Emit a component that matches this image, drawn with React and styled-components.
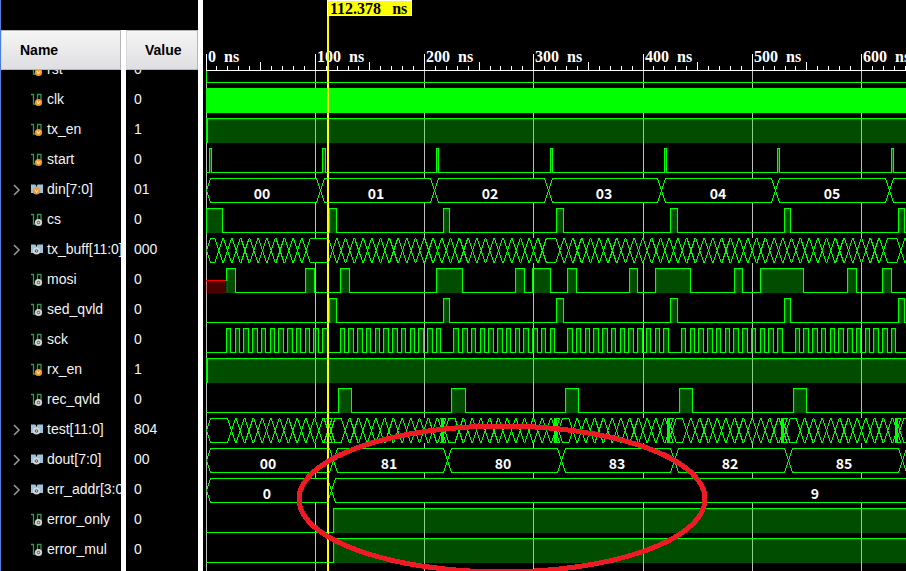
import React from 'react';
import styled, { createGlobalStyle } from 'styled-components';

const GlobalStyle = createGlobalStyle`
  * { box-sizing: border-box; }
  body { margin: 0; background: #000; }
`;

const Viewer = styled.main`
  display: flex;
  height: 100vh;
  min-height: 400px;
  overflow: hidden;
  background: #000;
  color: #f4f4f4;
  font: 14px/30px "Liberation Sans", Arial, sans-serif;
`;

const SignalPanel = styled.section`
  display: flex;
  flex: none;
  flex-direction: column;
  padding-top: 30px;
  border-left: 1px solid #4a7fd6;
  border-right: 5px solid #fff;
`;

const SignalTable = styled.table`
  display: flex;
  flex: 1;
  flex-direction: column;
  min-height: 0;
`;

const TableHead = styled.thead`
  display: block;
`;

const TableBody = styled.tbody`
  display: flex;
  flex: 1;
  flex-direction: column;
  min-height: 0;
`;

const Row = styled.tr`
  display: grid;
  grid-template-columns: 120px 72px;
  grid-template-rows: ${(p) => (p.$scrolled ? '14px' : 'auto')};
  column-gap: 5px;
  flex: ${(p) => (p.$last ? '1 0 30px' : 'none')};
  align-items: ${(p) => (p.$scrolled ? 'end' : 'stretch')};
  overflow: hidden;
  background: linear-gradient(#fff, #fff) 120px 0 / 5px 100% no-repeat;
`;

const HeadCell = styled.th`
  height: 40px;
  padding: 0 18px;
  border: 1px solid #b6b6b8;
  border-left-color: #d8d8da;
  background: linear-gradient(#f5f5f5, #dfdfe3);
  color: #000;
  font-weight: bold;
  line-height: 38px;
  text-align: left;
`;

const NameCell = styled.td`
  display: grid;
  grid-template-columns: 18px 16px 1fr;
  grid-auto-rows: 30px;
  align-items: center;
  padding: 0 0 0 11px;
  overflow: hidden;
  white-space: nowrap;
`;

const NameText = styled.span`
  grid-column: 3;
  padding-left: 1px;
`;

const ValueCell = styled.td`
  padding: 0 8px;
`;

const Expander = styled.button`
  display: flex;
  width: 12px;
  height: 16px;
  padding: 0;
  border: 0;
  background: none;
  color: #9a9a9a;
  cursor: pointer;
`;

const Glyph = styled.svg`
  grid-column: 2;
  display: block;
  width: 16px;
  height: 16px;
`;

const WavePanel = styled.section`
  display: flex;
  flex: 1;
  min-width: 0;
`;

const WaveChart = styled.svg`
  flex: 1;
  min-width: 0;
  height: 100%;
  overflow: hidden;
  shape-rendering: crispEdges;
`;

const RulerText = styled.text`
  font: bold 16px "Liberation Serif", "Times New Roman", serif;
  fill: ${(p) => (p.$dark ? '#000' : '#fff')};
`;

const BusText = styled.text`
  font: bold 14px "Noto Sans CJK SC", "Noto Sans", sans-serif;
  fill: #fff;
  text-anchor: middle;
`;

const signals = [
  { name: 'rst', value: '0', input: true },
  { name: 'clk', value: '0', input: true },
  { name: 'tx_en', value: '1', input: true },
  { name: 'start', value: '0', input: true },
  { name: 'din[7:0]', value: '01', input: true, bus: true },
  { name: 'cs', value: '0' },
  { name: 'tx_buff[11:0]', value: '000', bus: true },
  { name: 'mosi', value: '0' },
  { name: 'sed_qvld', value: '0' },
  { name: 'sck', value: '0' },
  { name: 'rx_en', value: '1', input: true },
  { name: 'rec_qvld', value: '0' },
  { name: 'test[11:0]', value: '804', bus: true },
  { name: 'dout[7:0]', value: '00', bus: true },
  { name: 'err_addr[3:0]', value: '0', bus: true },
  { name: 'error_only', value: '0' },
  { name: 'error_mul', value: '0' },
];

const GREEN = '#00ff00';
const END = 2000;
const SWING = 24;
const FRAME = 113.76;
const BIT = 8.745;
const NS = 1.0925;

const range = (n) => Array.from({ length: n }, (_, i) => i);

const chipSelect = [[123, 130], [237, 243], [350, 357], [464, 471], [578, 584], [692, 698]];
const startPulses = [[3, 5], [116, 119], [230, 232], [344, 346], [458, 460], [571, 573], [685, 687]];
const mosiPulses = [
  [20, 29], [99, 108], [134, 143], [230, 256], [309, 318], [326, 344], [361, 370],
  [423, 431], [449, 484], [528, 536], [554, 597], [641, 650], [676, 685],
];
const recPulses = [[132, 145], [245, 259], [359, 372], [473, 486], [587, 600]];
const clockPulses = range(6).flatMap((g) =>
  range(12).map((k) => {
    const x = 20.3 + g * FRAME + k * BIT;
    return [Math.floor(x), Math.floor(x + 4.6)];
  }),
);

const idleBits = [11, 12, 38, 77];
const bufferEdges = range(84).filter((k) => !idleBits.includes(k)).map((k) => 12.3 + k * BIT);
const testEdges = range(7).flatMap((g) => [
  ...range(11).map((k) => 25 + g * FRAME + k * BIT),
  121.5 + g * FRAME,
  124.5 + g * FRAME,
]);
const testBursts = [235, 348, 461, 575, 689];

const dinLabels = [[56, '00'], [170, '01'], [284, '02'], [398, '03'], [512, '04'], [626, '05']];
const doutLabels = [[62, '00'], [183, '81'], [297, '80'], [411, '83'], [524, '82'], [638, '85']];

function SignalIcon({ bus, input }) {
  const cx = bus ? 6.5 : 8.5;
  const cy = bus ? 10 : 11.5;
  return (
    <Glyph viewBox="0 0 16 16" aria-hidden="true">
      {bus ? (
        <path d="M1 3.500h4.500l1 2.500 1-2.500H13V12H1z" fill="#9cc3d9" />
      ) : (
        <path d="M1 3.500h2.500v9.500H7.500V3.500h3.500v8" fill="none" stroke="#35984b" strokeWidth="1.300" />
      )}
      <circle cx={cx} cy={cy} r="3.600" fill={input ? '#f3962f' : '#d6d6d6'} />
      {input ? (
        <path d={`M${cx - 1.5} ${cy - 1.5}l1.500 3 1.500-3`} fill="none" stroke="#fff" />
      ) : (
        <circle cx={cx} cy={cy} r="1.300" fill="#d6d6d6" stroke="#555" />
      )}
    </Glyph>
  );
}

function SignalRow({ signal, first, last }) {
  return (
    <Row $scrolled={first} $last={last}>
      <NameCell>
        {signal.bus && (
          <Expander type="button" aria-label={`Expand ${signal.name}`}>
            <svg width="12" height="16" viewBox="0 0 12 16" aria-hidden="true">
              <path d="M2 4l5 5-5 5" fill="none" stroke="currentColor" strokeWidth="1.500" />
            </svg>
          </Expander>
        )}
        <SignalIcon bus={signal.bus} input={signal.input} />
        <NameText>{signal.name}</NameText>
      </NameCell>
      <ValueCell>{signal.value}</ValueCell>
    </Row>
  );
}

function LogicTrace({ top, pulses, unknownUntil = 0 }) {
  const high = top + 0.5;
  const low = high + SWING;
  const steps = pulses.map(([a, b]) => `H${a + 0.5}V${high}H${b + 0.5}V${low}`).join('');
  return (
    <g>
      {pulses.map(([a, b]) => (
        <g key={a} fill={GREEN}>
          <rect x={a} y={top} width={b - a} height="25" opacity="0.3" />
          <rect x={a} y={top + 1} width={b - a} height="1" opacity="0.14" />
          <rect x={a + 1} y={top + 1} width="1" height="24" opacity="0.14" />
        </g>
      ))}
      <path
        d={`M${unknownUntil} ${unknownUntil ? high + 12 : low}${steps}H${END}`}
        fill="none"
        stroke={GREEN}
      />
      {unknownUntil > 0 && (
        <g fill="#f00">
          <rect x="0" y={top + 12} width={unknownUntil} height="13" opacity="0.3" />
          <rect x="0" y={top + 12} width={unknownUntil} height="1" />
        </g>
      )}
    </g>
  );
}

function BusTrace({ top, edges, labels = [], bursts = [] }) {
  const high = top + 0.5;
  const low = high + SWING;
  const mid = high + SWING / 2;
  const stops = [0.5, ...edges.map((x) => x + 0.5), END];
  const side = (rail) =>
    stops
      .slice(0, -1)
      .map((x, i) => `M${x} ${mid}L${x + 4} ${rail}H${stops[i + 1] - 4}L${stops[i + 1]} ${mid}`)
      .join('');
  return (
    <g>
      <rect x="1" y={top} width={END} height="25" fill="#000" />
      <path d={side(high) + side(low)} fill="none" stroke={GREEN} />
      {bursts.map((x) => (
        <rect key={x} x={x} y={top} width="3" height="25" fill={GREEN} />
      ))}
      {labels.map(([x, text]) => (
        <BusText key={x} x={x} y={top + 21}>{text}</BusText>
      ))}
    </g>
  );
}

function HighTrace({ top }) {
  return (
    <g>
      <LogicTrace top={top} pulses={[[0, END]]} />
      <rect x="0" y={top} width="2" height="25" fill={GREEN} />
    </g>
  );
}

function Ruler() {
  return (
    <g>
      {range(180).map((i) => {
        const x = Math.floor(i * 10 * NS);
        const size = i % 10 === 0 ? 16 : i % 5 === 0 ? 8 : 4;
        return <rect key={i} x={x} y={70 - size} width="1" height={size} fill="#fff" />;
      })}
      <rect x="0" y="70" width={END} height="1" fill="#fff" />
      {range(18).map((i) => {
        const x = Math.floor(i * 100 * NS);
        return (
          <g key={i}>
            <rect x={x} y="71" width="1" height={END} fill="#c0c0c0" />
            <RulerText x={x + 2} y="62">
              {i * 100}
              <tspan dx="8">ns</tspan>
            </RulerText>
          </g>
        );
      })}
    </g>
  );
}

function Cursor() {
  return (
    <g>
      <rect x="121" y="0" width="2" height={END} fill="#ff0" />
      <rect x="121" y="0" width="85" height="16" fill="#fff" />
      <rect x="122" y="1" width="83" height="14" fill="#ff0" />
      <RulerText $dark x="124" y="14">
        112.378
        <tspan dx="11">ns</tspan>
      </RulerText>
    </g>
  );
}

function Waveforms() {
  return (
    <WaveChart role="img" aria-label="Simulation waveforms">
      <g transform="translate(3 0)">
        <Ruler />
        <rect x="0" y="71" width="1" height="12" fill={GREEN} />
        <rect x="0" y="82" width={END} height="1" fill={GREEN} />
        <rect x="0" y="88" width={END} height="25" fill={GREEN} />
        <HighTrace top={118} />
        <LogicTrace top={148} pulses={startPulses} />
        <BusTrace top={178} edges={[114, 228, 342, 455, 569, 683]} labels={dinLabels} />
        <LogicTrace top={208} pulses={[[0, 16], ...chipSelect]} />
        <BusTrace top={238} edges={bufferEdges} />
        <LogicTrace top={268} pulses={mosiPulses} unknownUntil={20} />
        <LogicTrace top={298} pulses={chipSelect} />
        <LogicTrace top={328} pulses={clockPulses} />
        <HighTrace top={358} />
        <LogicTrace top={388} pulses={recPulses} />
        <BusTrace top={418} edges={testEdges} bursts={testBursts} />
        <BusTrace top={448} edges={[127, 241, 355, 468, 582, 696]} labels={doutLabels} />
        <BusTrace top={478} edges={[125]} labels={[[61, '0'], [609, '9']]} />
        <LogicTrace top={508} pulses={[[127, END]]} />
        <LogicTrace top={538} pulses={[[127, END]]} />
        <Cursor />
        <ellipse cx="296" cy="499" rx="203" ry="73" fill="none" stroke="#ed1c24" strokeWidth="5" />
      </g>
    </WaveChart>
  );
}

export default function App() {
  return (
    <Viewer>
      <GlobalStyle />
      <SignalPanel>
        <SignalTable>
          <TableHead>
            <Row>
              <HeadCell scope="col">Name</HeadCell>
              <HeadCell scope="col">Value</HeadCell>
            </Row>
          </TableHead>
          <TableBody>
            {signals.map((signal, i) => (
              <SignalRow
                key={signal.name}
                signal={signal}
                first={i === 0}
                last={i === signals.length - 1}
              />
            ))}
          </TableBody>
        </SignalTable>
      </SignalPanel>
      <WavePanel>
        <Waveforms />
      </WavePanel>
    </Viewer>
  );
}
